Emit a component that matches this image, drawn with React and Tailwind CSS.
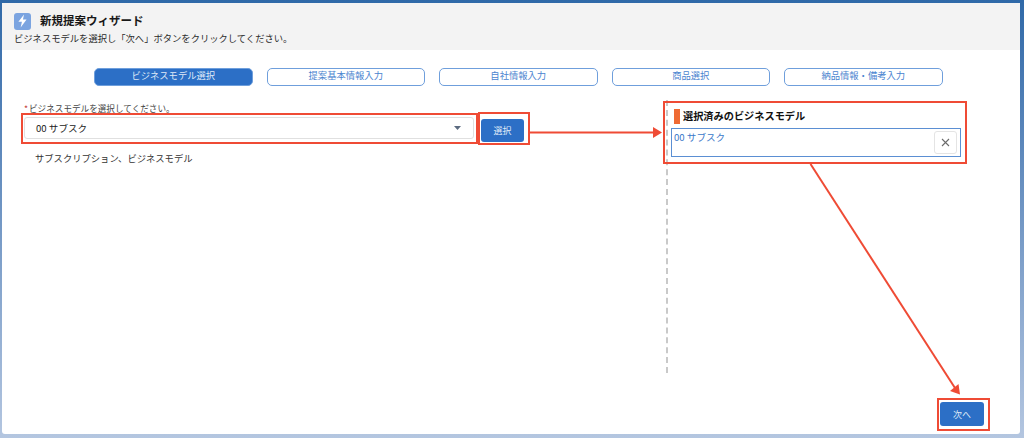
import React from 'react';

const TABS = ['ビジネスモデル選択', '提案基本情報入力', '自社情報入力', '商品選択', '納品情報・備考入力'];

const Tab = ({ label, active }) => (
  <div
    className={`w-[158.5px] h-[18px] flex items-center justify-center rounded-[5px] border border-[#6f9fdc] text-[9.3px] leading-none pb-[2px] ${
      active ? 'bg-[#2c6fc6] text-[#dfe9f7]' : 'bg-white text-[#4a84cf]'
    }`}
  >
    {label}
  </div>
);

// 赤い注釈（枠と矢印）
const Annotations = () => (
  <div className="absolute inset-0 pointer-events-none">
    <div className="absolute left-[21px] top-[113px] w-[457px] h-[31px] border-2 border-[#ef4b35]" />
    <div className="absolute left-[478px] top-[112px] w-[52px] h-[33px] border-2 border-[#ef4b35]" />
    <div className="absolute left-[663px] top-[101px] w-[304px] h-[63px] border-2 border-[#ef4b35]" />
    <div className="absolute left-[937px] top-[398px] w-[53px] h-[33px] border-2 border-[#ef4b35]" />
    <svg className="absolute left-0 top-0" width="1024" height="438" viewBox="0 0 1024 438" fill="none">
      <path d="M530 132.5H656" stroke="#ef4b35" strokeWidth="2" />
      <path d="M653 127L662 132.5L653 138Z" fill="#ef4b35" />
      <path d="M810.5 164L955 388" stroke="#ef4b35" strokeWidth="2" />
      <path d="M950 391L960 394.5L958.5 384Z" fill="#ef4b35" />
    </svg>
  </div>
);

export default function App() {
  return (
    <div
      className="relative w-[1024px] h-[438px] overflow-hidden bg-gradient-to-b from-[#2f69a8] to-[#b4c6e0] pt-[3px] pl-[2px] pr-[4px] pb-[4px] font-['Noto_Sans_CJK_JP',sans-serif]"
    >
      <div className="w-full h-full flex flex-col bg-white rounded-[3px]">
        <div className="h-[47px] shrink-0 bg-[#f3f3f3] pl-[12px] pt-[9px]">
          <div className="flex items-center gap-[9px] h-[18px]">
            <div className="w-[17px] h-[17px] rounded-[3px] bg-[#7ba4e0] flex items-center justify-center">
              <svg width="13" height="14" viewBox="0 0 11 12">
                <path d="M6.8 0.5L2 6.7H5L3.9 11.5L9 4.8H5.9Z" fill="white" />
              </svg>
            </div>
            <h1 className="text-[11.5px] leading-none font-bold text-[#181818]">新規提案ウィザード</h1>
          </div>
          <p className="text-[9.3px] leading-none mt-[4px] text-[#2b2b2b]">
            ビジネスモデルを選択し「次へ」ボタンをクリックしてください。
          </p>
        </div>

        <div className="flex-1 flex flex-col min-h-0">
          <div className="flex gap-[14px] pl-[92px] pt-[18px]">
            {TABS.map((t, i) => (
              <Tab key={t} label={t} active={i === 0} />
            ))}
          </div>

          <div className="flex-1 flex min-h-0 mt-[14px]">
            <div className="w-[664px] shrink-0 pl-[22px]">
              <label className="block text-[8.6px] leading-none text-[#444] mt-[4px]">
                <span className="text-[#c23934] mr-[1px]">*</span>
                ビジネスモデルを選択してください。
              </label>
              <div className="flex items-start gap-[7px] mt-[4px]">
                <div className="w-[450px] h-[22px] flex items-center justify-between rounded-[3px] border border-[#e0e0e0] bg-white pl-[11px] pr-[12px] pt-[1px] text-[9.6px] text-[#222]">
                  <span>00 サブスク</span>
                  <svg width="7" height="4" viewBox="0 0 7 4">
                    <path d="M0 0H7L3.5 4Z" fill="#5c6b80" />
                  </svg>
                </div>
                <button className="w-[43px] h-[23px] mt-[2px] rounded-[3px] bg-[#2c6fc6] text-[#dfe9f7] text-[9px] leading-none">
                  選択
                </button>
              </div>
              <p className="text-[9.3px] leading-none mt-[12px] pl-[11px] text-[#333]">
                サブスクリプション、ビジネスモデル
              </p>
            </div>

            <div className="w-[312px] shrink-0 h-[273px] border-l-2 border-dashed border-[#c9c9c9] pl-[3px]">
              <div className="flex items-center h-[15px] mt-[9px] ml-[3px] gap-[3px]">
                <div className="w-[6px] h-[15px] bg-[#ef6a33]" />
                <h2 className="text-[10.2px] leading-none font-bold text-[#111]">選択済みのビジネスモデル</h2>
              </div>
              <div className="w-[290px] h-[29px] mt-[4px] flex justify-between border border-[#5b8fd3] pl-[2px] pr-[3px] pt-[2px]">
                <span className="text-[9.6px] leading-none mt-[2px] text-[#3a78c9]">00 サブスク</span>
                <button className="w-[23px] h-[23px] flex items-center justify-center rounded-[3px] border border-[#e4e4e4] bg-white">
                  <svg width="9" height="9" viewBox="0 0 9 9" stroke="#6b6b6b" strokeWidth="1.1" fill="none">
                    <path d="M1 1L8 8M8 1L1 8" />
                  </svg>
                </button>
              </div>
            </div>
          </div>

          <div className="flex justify-end pr-[36px] pb-[8px]">
            <button className="w-[44px] h-[24px] rounded-[3px] bg-[#2c6fc6] text-[#dfe9f7] text-[9px] leading-none">
              次へ
            </button>
          </div>
        </div>
      </div>
      <Annotations />
    </div>
  );
}
